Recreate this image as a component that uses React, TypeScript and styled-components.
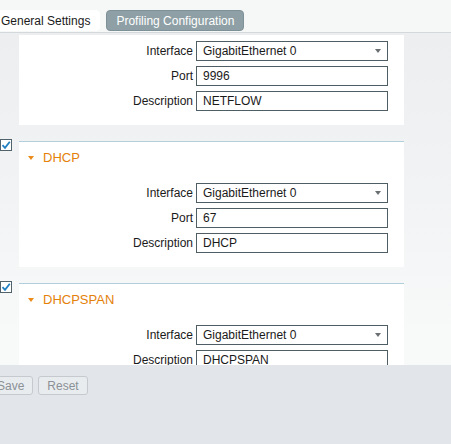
import React from 'react';
import styled, { createGlobalStyle } from 'styled-components';

const GlobalStyle = createGlobalStyle`
  html, body {
    margin: 0;
    padding: 0;
    background: #f6f7f7;
  }
  body {
    font-family: "Liberation Sans", Arial, sans-serif;
    font-size: 12px;
    color: #1a1a1a;
  }
`;

const Page = styled.div`
  width: 451px;
  height: 444px;
  display: flex;
  flex-direction: column;
  overflow: hidden;
`;

const TabBar = styled.div`
  height: 33px;
  box-sizing: border-box;
  padding-top: 10px;
  display: flex;
  gap: 6px;
  margin-left: -9px;
  border-bottom: 1px solid #d4d8db;
  background: #f6f7f7;
`;

const Tab = styled.div<{ $active?: boolean }>`
  height: 21px;
  box-sizing: border-box;
  padding: 0 9px;
  display: flex;
  align-items: center;
  border-radius: 4px;
  font-size: 12px;
  background: ${(p) => (p.$active ? '#8e9fa5' : '#ffffff')};
  color: ${(p) => (p.$active ? '#ffffff' : '#1a1a1a')};
  border: 1px solid ${(p) => (p.$active ? '#7f9198' : '#ffffff')};
`;

const Content = styled.div`
  flex: 1;
  overflow: hidden;
  background: linear-gradient(#eceef0, #f2f3f4 160px, #f8f9f9 300px);
  padding-top: 2px;
`;

const Section = styled.div`
  display: flex;
  margin-bottom: 16px;
`;

const CheckColumn = styled.div`
  width: 19px;
  flex: none;
`;

const Checkbox = styled.div`
  width: 12px;
  height: 12px;
  box-sizing: border-box;
  margin-top: -2px;
  border: 1px solid #52626a;
  background: #fff;
  display: flex;
  align-items: center;
  justify-content: center;
`;

const Card = styled.div<{ $header?: boolean }>`
  width: 385px;
  background: #fff;
  box-sizing: border-box;
  border-top: ${(p) => (p.$header ? '1px solid #b2ceda' : 'none')};
  padding-top: ${(p) => (p.$header ? '0' : '6px')};
  padding-bottom: 14px;
`;

const Header = styled.div`
  height: 41px;
  display: flex;
  align-items: flex-start;
  padding: 8px 0 0 9px;
  box-sizing: border-box;
  color: #e4810a;
  font-size: 13px;
  gap: 9px;
`;

const Caret = styled.span`
  width: 0;
  height: 0;
  margin-top: 6px;
  border-left: 3.5px solid transparent;
  border-right: 3.5px solid transparent;
  border-top: 4px solid #ec8b1b;
`;

const Fields = styled.div`
  display: grid;
  grid-template-columns: 174px 192px;
  column-gap: 3px;
  row-gap: 5px;
  align-items: center;
`;

const Label = styled.div`
  text-align: right;
  font-size: 12px;
  color: #1a1a1a;
`;

const Box = styled.div`
  height: 20px;
  box-sizing: border-box;
  border: 1px solid #4f5d64;
  padding: 0 6px;
  display: flex;
  align-items: center;
  justify-content: space-between;
  background: #fff;
  font-size: 12px;
  color: #1a1a1a;
`;

const Arrow = styled.span`
  width: 0;
  height: 0;
  border-left: 3px solid transparent;
  border-right: 3px solid transparent;
  border-top: 4px solid #6a6f72;
`;

const Footer = styled.div`
  height: 79px;
  flex: none;
  background: #e2e6ea;
  display: flex;
  align-items: flex-start;
  gap: 5px;
  padding-top: 11px;
  box-sizing: border-box;
`;

const Button = styled.div<{ $first?: boolean }>`
  height: 19px;
  box-sizing: border-box;
  padding: 0 8px;
  margin-left: ${(p) => (p.$first ? '-12px' : '0')};
  border: 1px solid #c6cacf;
  border-radius: 3px;
  background: #e9ecef;
  color: #8b9196;
  font-size: 12px;
  display: flex;
  align-items: center;
`;

type Field = { label: string; value: string; select?: boolean };

const FieldList = ({ fields }: { fields: Field[] }) => (
  <Fields>
    {fields.map((f) => (
      <React.Fragment key={f.label}>
        <Label>{f.label}</Label>
        <Box>
          <span>{f.value}</span>
          {f.select && <Arrow />}
        </Box>
      </React.Fragment>
    ))}
  </Fields>
);

const Check = () => (
  <Checkbox>
    <svg width="10" height="10" viewBox="0 0 10 10">
      <path d="M1.5 5.2 L4 7.8 L8.8 1.8" stroke="#1f7fc0" strokeWidth="1.8" fill="none" />
    </svg>
  </Checkbox>
);

const probes = [
  {
    name: 'DHCP',
    fields: [
      { label: 'Interface', value: 'GigabitEthernet 0', select: true },
      { label: 'Port', value: '67' },
      { label: 'Description', value: 'DHCP' },
    ],
  },
  {
    name: 'DHCPSPAN',
    fields: [
      { label: 'Interface', value: 'GigabitEthernet 0', select: true },
      { label: 'Description', value: 'DHCPSPAN' },
    ],
  },
];

const App: React.FC = () => {
  return (
    <Page>
      <GlobalStyle />
      <TabBar>
        <Tab>General Settings</Tab>
        <Tab $active>Profiling Configuration</Tab>
      </TabBar>
      <Content>
        <Section>
          <CheckColumn />
          <Card>
            <FieldList
              fields={[
                { label: 'Interface', value: 'GigabitEthernet 0', select: true },
                { label: 'Port', value: '9996' },
                { label: 'Description', value: 'NETFLOW' },
              ]}
            />
          </Card>
        </Section>
        {probes.map((p) => (
          <Section key={p.name}>
            <CheckColumn>
              <Check />
            </CheckColumn>
            <Card $header>
              <Header>
                <Caret />
                <span>{p.name}</span>
              </Header>
              <FieldList fields={p.fields} />
            </Card>
          </Section>
        ))}
      </Content>
      <Footer>
        <Button $first>Save</Button>
        <Button>Reset</Button>
      </Footer>
    </Page>
  );
};

export default App;
